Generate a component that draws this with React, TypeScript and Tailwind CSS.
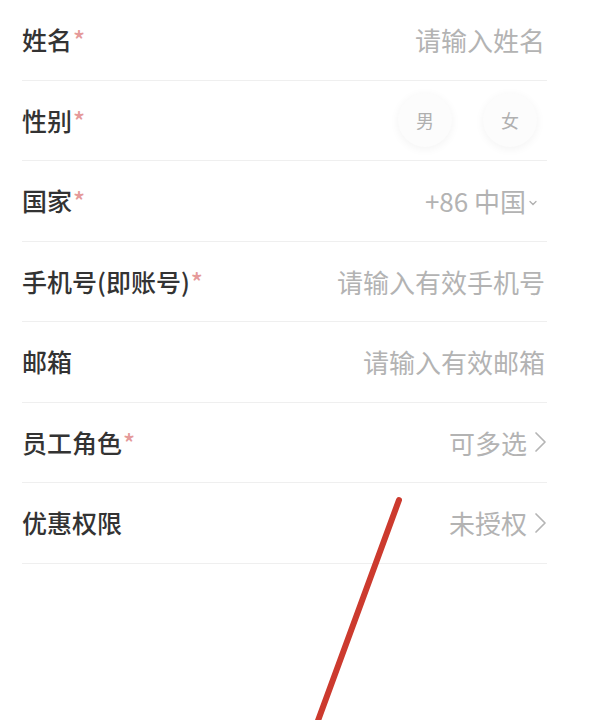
const font = { fontFamily: '"Noto Sans CJK SC", "Noto Sans", sans-serif' };

const Chevron = () => (
  <svg width="13" height="22" viewBox="0 0 13 22" className="ml-[7px]">
    <path d="M2 2 L11 11 L2 20" fill="none" stroke="#b5b5b5" strokeWidth="1.7" strokeLinecap="round" strokeLinejoin="round" />
  </svg>
);

const Row = ({ label, required, children }: { label: string; required?: boolean; children: React.ReactNode }) => (
  <div className="h-[80.5px] flex items-center justify-between border-b border-[#efefef]">
    <div className="text-[25px] font-medium text-[#333]">
      {label}
      {required && <span className="text-[#e59a9a] ml-[1px]">*</span>}
    </div>
    <div className="flex items-center text-[26px] text-[#b3b3b3]">{children}</div>
  </div>
);

export default function App() {
  return (
    <div className="relative w-[595px] h-[720px] bg-white overflow-hidden" style={font}>
      <div className="pl-[22px] pr-[48px]">
        <Row label="姓名" required>
          <span className="mr-[2px]">请输入姓名</span>
        </Row>
        <Row label="性别" required>
          <div className="flex items-center gap-[31px] mr-[10px]">
            <div className="w-[54px] h-[54px] rounded-full bg-[#fcfcfc] shadow-[0_2px_10px_rgba(0,0,0,0.05)] flex items-center justify-center text-[18px] text-[#b0b0b0]">男</div>
            <div className="w-[54px] h-[54px] rounded-full bg-[#fcfcfc] shadow-[0_2px_10px_rgba(0,0,0,0.05)] flex items-center justify-center text-[18px] text-[#b0b0b0]">女</div>
          </div>
        </Row>
        <Row label="国家" required>
          <span>+86 中国</span>
          <svg width="8" height="6" viewBox="0 0 8 6" className="ml-[3px] mt-[4px] mr-[10px]">
            <path d="M1 1.5 L4 4.5 L7 1.5" fill="none" stroke="#b0b0b0" strokeWidth="1.3" strokeLinecap="round" />
          </svg>
        </Row>
        <Row label="手机号(即账号)" required>
          <span className="mr-[2px]">请输入有效手机号</span>
        </Row>
        <Row label="邮箱">
          <span className="mr-[2px]">请输入有效邮箱</span>
        </Row>
        <Row label="员工角色" required>
          可多选
          <Chevron />
        </Row>
        <Row label="优惠权限">
          未授权
          <Chevron />
        </Row>
      </div>
      <svg className="absolute left-0 top-0 pointer-events-none" width="595" height="720">
        <line x1="399" y1="500" x2="316" y2="726" stroke="#cc3a2e" strokeWidth="6" strokeLinecap="round" />
      </svg>
    </div>
  );
}
